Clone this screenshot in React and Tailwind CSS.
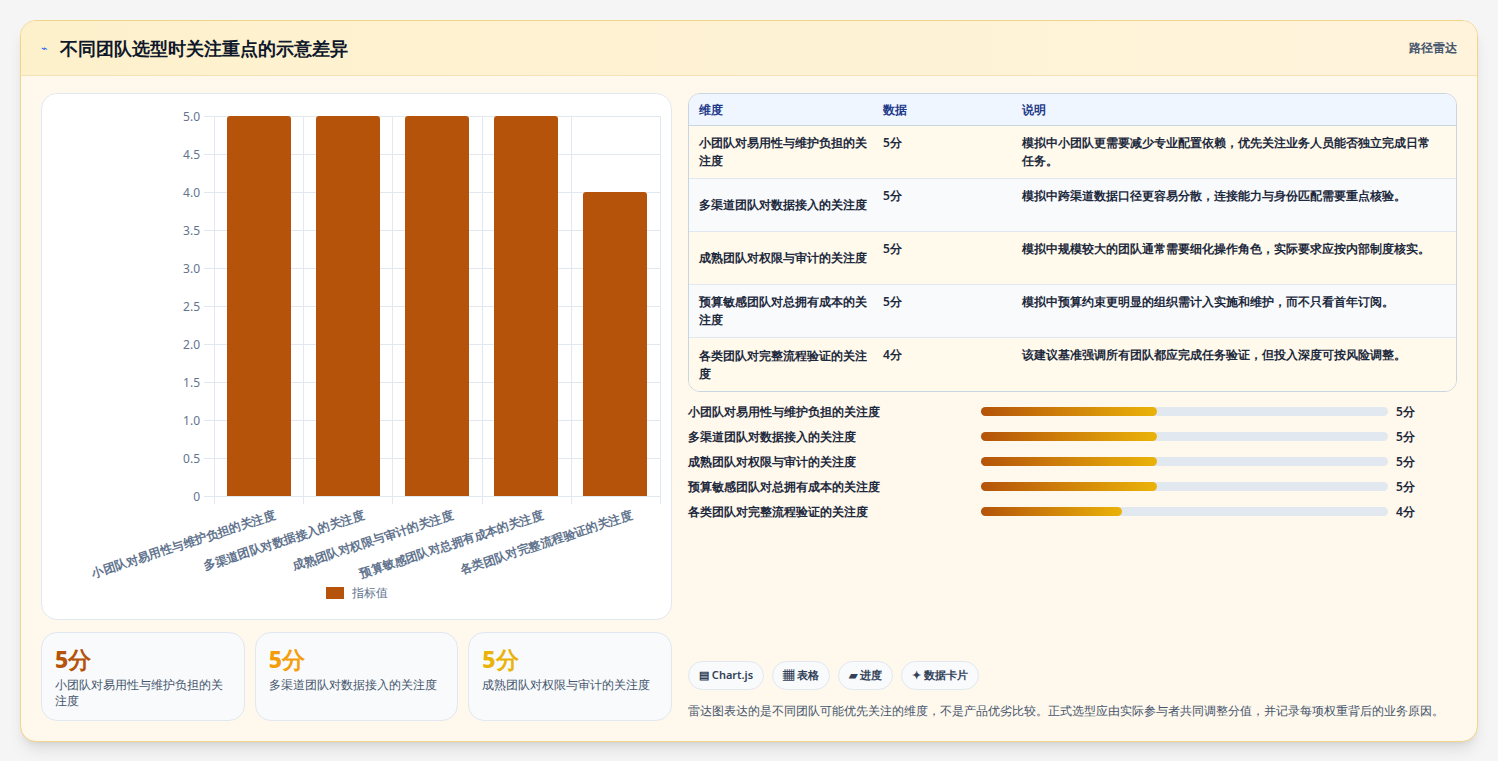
const dims = [
  "小团队对易用性与维护负担的关注度",
  "多渠道团队对数据接入的关注度",
  "成熟团队对权限与审计的关注度",
  "预算敏感团队对总拥有成本的关注度",
  "各类团队对完整流程验证的关注度",
];
const vals = [5, 5, 5, 5, 4];
const notes = [
  "模拟中小团队更需要减少专业配置依赖，优先关注业务人员能否独立完成日常任务。",
  "模拟中跨渠道数据口径更容易分散，连接能力与身份匹配需要重点核验。",
  "模拟中规模较大的团队通常需要细化操作角色，实际要求应按内部制度核实。",
  "模拟中预算约束更明显的组织需计入实施和维护，而不只看首年订阅。",
  "该建议基准强调所有团队都应完成任务验证，但投入深度可按风险调整。",
];
const ticks = ["5.0", "4.5", "4.0", "3.5", "3.0", "2.5", "2.0", "1.5", "1.0", "0.5", "0"];

function Chart() {
  return (
    <div className="relative h-[527px] rounded-2xl border border-slate-200 bg-white">
      {/* plot */}
      <div className="absolute left-[172px] top-[22px] h-[380px] w-[446px]">
        {ticks.map((t, i) => (
          <div key={t} className="absolute left-[-10px] right-0 border-t border-slate-200" style={{ top: i * 38 }}>
            <span className="absolute right-[calc(100%+4px)] top-[-8px] text-[12px] leading-4 text-slate-500">{t}</span>
          </div>
        ))}
        {[0, 1, 2, 3, 4, 5].map((i) => (
          <div key={i} className="absolute bottom-[-8px] top-0 border-l border-slate-200" style={{ left: i * 89.2 }} />
        ))}
        {vals.map((v, i) => (
          <div
            key={i}
            className="absolute bottom-0 w-[64px] rounded-t-[3px] bg-[#b45309]"
            style={{ left: i * 89.2 + 12.6, height: v * 76 }}
          />
        ))}
        {dims.map((d, i) => (
          <div
            key={d}
            className="absolute whitespace-nowrap text-[12px] font-semibold text-slate-500"
            style={{ right: 446 - i * 89.2 - 58, top: 390, transform: "rotate(-18deg)", transformOrigin: "right top" }}
          >
            {d}
          </div>
        ))}
      </div>
      <div className="absolute left-0 right-0 top-[490px] flex items-center justify-center gap-2 text-[12px] text-slate-500">
        <span className="h-3 w-[18px] bg-[#b45309]" />
        指标值
      </div>
    </div>
  );
}

export default function App() {
  return (
    <div className="min-h-[761px] bg-[#f5f5f5] p-5 font-['Noto_Sans_CJK_SC',sans-serif]">
      <div className="overflow-hidden rounded-2xl border border-[#f1d58a] bg-[#fff8ec] shadow-lg">
        <div className="flex h-[55px] items-center justify-between border-b border-[#f3e2b5] bg-gradient-to-r from-[#fdf1cc] to-[#fff3dc] px-5">
          <div className="flex items-center gap-3">
            <span className="text-[11px] text-blue-600">⌁</span>
            <h1 className="text-[18px] font-bold text-slate-900">不同团队选型时关注重点的示意差异</h1>
          </div>
          <span className="text-[12px] font-semibold text-slate-600">路径雷达</span>
        </div>
        <div className="flex gap-4 px-5 pb-5 pt-[17px]">
          <div className="flex w-[631px] flex-col gap-3">
            <Chart />
            <div className="grid grid-cols-3 gap-[10px]">
              {[0, 1, 2].map((i) => (
                <div key={i} className="h-[89px] rounded-2xl border border-slate-200 bg-[#f8fafc] px-[13px] pt-3">
                  <div className={`text-[23px] font-extrabold leading-7 ${["text-[#b45309]", "text-[#f59e0b]", "text-[#eab308]"][i]}`}>5分</div>
                  <div className="mt-1 text-[12px] leading-4 text-slate-600">{dims[i]}</div>
                </div>
              ))}
            </div>
          </div>
          <div className="flex flex-1 flex-col">
            <div className="overflow-hidden rounded-xl border border-slate-300 text-[12px]">
              <div className="grid h-[32px] grid-cols-[184px_139px_1fr] items-center border-b border-slate-300 bg-[#eff6ff] px-[10px] font-semibold text-[#1e3a8a]">
                <span>维度</span><span>数据</span><span>说明</span>
              </div>
              {dims.map((d, i) => (
                <div key={d} className={`grid h-[53px] grid-cols-[184px_139px_1fr] items-center px-[10px] font-semibold leading-[18px] text-slate-800 ${i % 2 ? "bg-[#f8fafc]" : "bg-[#fffaeb]"} ${i < 4 ? "border-b border-slate-200" : ""}`}>
                  <span className="pr-4">{d}</span>
                  <span className="self-start pt-2">{vals[i]}分</span>
                  <span className="self-start pt-2 pr-2">{notes[i]}</span>
                </div>
              ))}
            </div>
            <div className="mt-[7px] flex flex-col">
              {dims.map((d, i) => (
                <div key={d} className="flex h-[25px] items-center text-[12px] font-semibold text-slate-800">
                  <span className="w-[293px]">{d}</span>
                  <div className="h-[9px] w-[407px] rounded-full bg-slate-200">
                    <div className="h-full rounded-full bg-gradient-to-r from-[#b45309] to-[#eab308]" style={{ width: vals[i] === 5 ? 176 : 141 }} />
                  </div>
                  <span className="ml-2">{vals[i]}分</span>
                </div>
              ))}
            </div>
            <div className="mt-auto flex gap-2">
              {["▤ Chart.js", "▦ 表格", "▰ 进度", "✦ 数据卡片"].map((c) => (
                <span key={c} className="flex h-[29px] items-center rounded-full border border-slate-200 bg-[#f8fafc] px-[10px] text-[11px] font-semibold text-slate-700">{c}</span>
              ))}
            </div>
            <p className="mt-[10px] text-[12px] leading-[21px] text-slate-600">
              雷达图表达的是不同团队可能优先关注的维度，不是产品优劣比较。正式选型应由实际参与者共同调整分值，并记录每项权重背后的业务原因。
            </p>
          </div>
        </div>
      </div>
    </div>
  );
}
